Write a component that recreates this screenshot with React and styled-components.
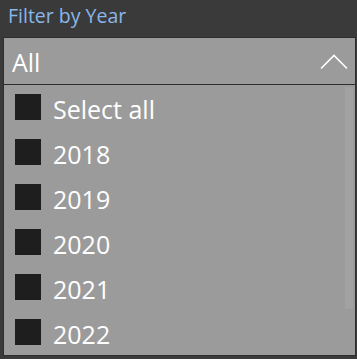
import React from "react";
import styled, { createGlobalStyle } from "styled-components";

const GlobalStyle = createGlobalStyle`
   html, body {
      margin: 0;
      padding: 0;
      background: #3a3a3a;
   }
   body {
      font-family: "Open Sans", "Noto Sans", sans-serif;
   }
`;

const Slicer = styled.div`
   width: 357px;
   height: 359px;
   box-sizing: border-box;
   padding: 0 1px 2px 3px;
   background: #3a3a3a;
`;

const Title = styled.div`
   height: 37px;
   padding-left: 5px;
   font-size: 19.5px;
   line-height: 32px;
   color: #8ab6e9;
`;

const Header = styled.div`
   display: flex;
   align-items: center;
   justify-content: space-between;
   box-sizing: border-box;
   height: 48px;
   padding: 1px 6px 0 8px;
   background: #9b9b9b;
   border: 1px solid #2e2e2e;
   color: #fff;
   font-size: 25px;
`;

const List = styled.div`
   position: relative;
   box-sizing: border-box;
   height: 271px;
   padding-top: 9px;
   background: #9b9b9b;
   border: 1px solid #2e2e2e;
   border-top: none;
`;

// faint scroll thumb drawn over the list
const Scrollbar = styled.div`
   position: absolute;
   top: 2px;
   right: 2px;
   width: 8px;
   height: 222px;
   background: #a2a2a2;
`;

const Row = styled.div`
   display: flex;
   align-items: flex-start;
   gap: 12px;
   height: 45px;
   padding-left: 11px;
   color: #fff;
   font-size: 25px;
   line-height: 30px;
`;

const Box = styled.span`
   flex: none;
   width: 26px;
   height: 26px;
   background: #1e1e1e;
`;

const Chevron = () => (
   <svg width="30" height="18" viewBox="0 0 30 18" fill="none">
      <path d="M2 15.5 L15 2.5 L28 15.5" stroke="#fff" strokeWidth="1.6" />
   </svg>
);

const options = ["Select all", "2018", "2019", "2020", "2021", "2022"];

const App = () => (
   <Slicer>
      <GlobalStyle />
      <Title>Filter by Year</Title>
      <Header>
         <span>All</span>
         <Chevron />
      </Header>
      <List>
         <Scrollbar />
         {options.map((label) => (
            <Row key={label}>
               <Box />
               <span>{label}</span>
            </Row>
         ))}
      </List>
   </Slicer>
);

export default App;
